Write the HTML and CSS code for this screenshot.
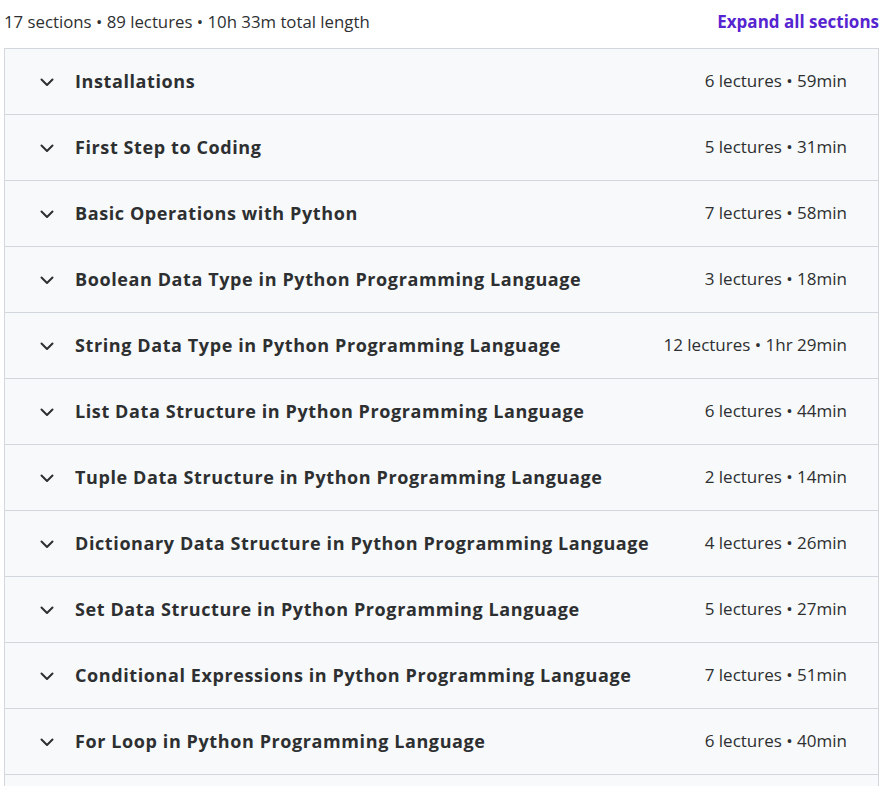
FILE: index.html
```html
<!DOCTYPE html>
<html lang="en">
<head>
    <meta charset="UTF-8">
    <title>Course content</title>
    <link rel="stylesheet" href="styles.css">
</head>
<body>
    <div class="curriculum">
        <div class="curriculum-header">
            <span class="curriculum-stats">17 sections • 89 lectures • 10h 33m total length</span>
            <button class="expand-all">Expand all sections</button>
        </div>
        <div class="section-list">
            <div class="section-row">
                <svg class="chevron" viewBox="0 0 16 16"><path d="M2.5 5.5l5.5 5.5 5.5-5.5"/></svg>
                <span class="section-title">Installations</span>
                <span class="section-meta">6 lectures • 59min</span>
            </div>
            <div class="section-row">
                <svg class="chevron" viewBox="0 0 16 16"><path d="M2.5 5.5l5.5 5.5 5.5-5.5"/></svg>
                <span class="section-title">First Step to Coding</span>
                <span class="section-meta">5 lectures • 31min</span>
            </div>
            <div class="section-row">
                <svg class="chevron" viewBox="0 0 16 16"><path d="M2.5 5.5l5.5 5.5 5.5-5.5"/></svg>
                <span class="section-title">Basic Operations with Python</span>
                <span class="section-meta">7 lectures • 58min</span>
            </div>
            <div class="section-row">
                <svg class="chevron" viewBox="0 0 16 16"><path d="M2.5 5.5l5.5 5.5 5.5-5.5"/></svg>
                <span class="section-title">Boolean Data Type in Python Programming Language</span>
                <span class="section-meta">3 lectures • 18min</span>
            </div>
            <div class="section-row">
                <svg class="chevron" viewBox="0 0 16 16"><path d="M2.5 5.5l5.5 5.5 5.5-5.5"/></svg>
                <span class="section-title">String Data Type in Python Programming Language</span>
                <span class="section-meta">12 lectures • 1hr 29min</span>
            </div>
            <div class="section-row">
                <svg class="chevron" viewBox="0 0 16 16"><path d="M2.5 5.5l5.5 5.5 5.5-5.5"/></svg>
                <span class="section-title">List Data Structure in Python Programming Language</span>
                <span class="section-meta">6 lectures • 44min</span>
            </div>
            <div class="section-row">
                <svg class="chevron" viewBox="0 0 16 16"><path d="M2.5 5.5l5.5 5.5 5.5-5.5"/></svg>
                <span class="section-title">Tuple Data Structure in Python Programming Language</span>
                <span class="section-meta">2 lectures • 14min</span>
            </div>
            <div class="section-row">
                <svg class="chevron" viewBox="0 0 16 16"><path d="M2.5 5.5l5.5 5.5 5.5-5.5"/></svg>
                <span class="section-title">Dictionary Data Structure in Python Programming Language</span>
                <span class="section-meta">4 lectures • 26min</span>
            </div>
            <div class="section-row">
                <svg class="chevron" viewBox="0 0 16 16"><path d="M2.5 5.5l5.5 5.5 5.5-5.5"/></svg>
                <span class="section-title">Set Data Structure in Python Programming Language</span>
                <span class="section-meta">5 lectures • 27min</span>
            </div>
            <div class="section-row">
                <svg class="chevron" viewBox="0 0 16 16"><path d="M2.5 5.5l5.5 5.5 5.5-5.5"/></svg>
                <span class="section-title">Conditional Expressions in Python Programming Language</span>
                <span class="section-meta">7 lectures • 51min</span>
            </div>
            <div class="section-row">
                <svg class="chevron" viewBox="0 0 16 16"><path d="M2.5 5.5l5.5 5.5 5.5-5.5"/></svg>
                <span class="section-title">For Loop in Python Programming Language</span>
                <span class="section-meta">6 lectures • 40min</span>
            </div>
            <!-- next section starts below the fold -->
            <div class="section-row section-row-more"></div>
        </div>
    </div>
</body>
</html>
```

FILE: styles.css
```css
html, body {
    margin: 0;
    padding: 0;
    background-color: #ffffff;
    font-family: "Open Sans", "Liberation Sans", Arial, sans-serif;
    color: #2d2f31;
    overflow: hidden;
}

.curriculum {
    padding: 0 3px 0 4px;
}

.curriculum-header {
    display: flex;
    justify-content: space-between;
    align-items: center;
    height: 43px;
    padding-bottom: 5px;
}

.curriculum-stats {
    font-size: 16.8px;
    color: #2d2f31;
}

.expand-all {
    background: none;
    border: none;
    padding: 0;
    font-family: inherit;
    font-size: 17px;
    font-weight: 700;
    color: #5624d0;
    cursor: pointer;
}

.section-list {
    border: 1px solid #d1d7dc;
    border-bottom: none;
}

.section-row {
    display: flex;
    align-items: center;
    height: 63px;
    padding: 0 31px 2px 34px;
    background-color: #f7f9fa;
    border-bottom: 1px solid #d1d7dc;
}

.section-row-more {
    height: 12px;
    padding-bottom: 0;
    border-bottom: none;
}

.chevron {
    width: 16px;
    height: 16px;
    flex-shrink: 0;
    margin-right: 20px;
    margin-top: 2px;
    fill: none;
    stroke: #2d2f31;
    stroke-width: 2;
    stroke-linecap: round;
    stroke-linejoin: round;
}

.section-title {
    flex: 1;
    font-size: 18px;
    font-weight: 700;
    letter-spacing: 0.6px;
}

.section-meta {
    font-size: 17px;
    color: #2d2f31;
    white-space: nowrap;
}
```
